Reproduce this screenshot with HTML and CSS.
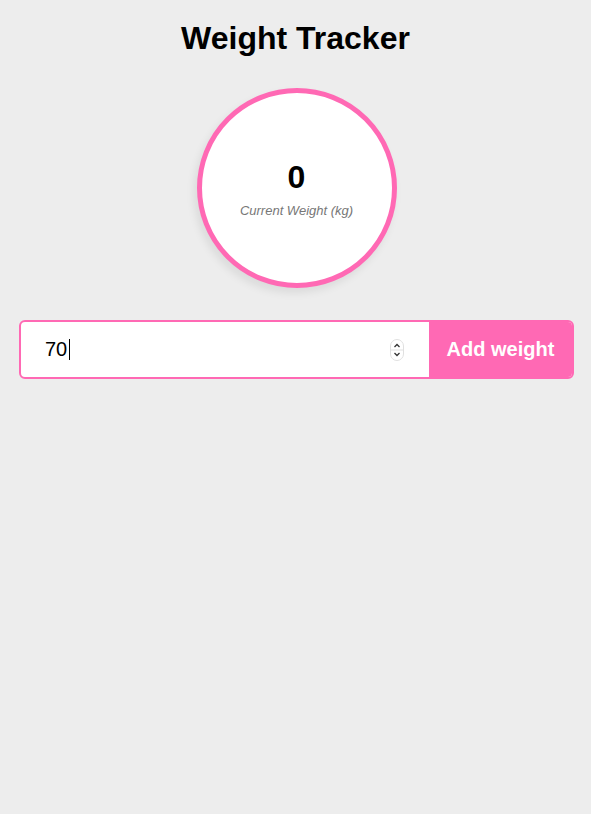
FILE: index.html
```html
<!DOCTYPE html>
<html>
<head>
<meta charset="utf-8">
<link rel="stylesheet" href="styles.css">
</head>
<body>
<div class="app">
  <h1 class="title">Weight Tracker</h1>
  <div class="circle">
    <div class="value">0</div>
    <div class="label">Current Weight (kg)</div>
  </div>
  <form class="entry">
    <div class="field">
      <input class="input" type="text" value="70">
      <span class="caret"></span>
      <span class="spinner">
        <svg width="14" height="22" viewBox="0 0 14 22">
          <rect x="0.5" y="0.5" width="13" height="21" rx="6.5" fill="#fff" stroke="#e0e0e0"/>
          <line x1="1" y1="11" x2="13" y2="11" stroke="#e0e0e0"/>
          <path d="M4.5 8 L7 5.5 L9.5 8" fill="none" stroke="#333" stroke-width="1.3"/>
          <path d="M4.5 14 L7 16.5 L9.5 14" fill="none" stroke="#333" stroke-width="1.3"/>
        </svg>
      </span>
    </div>
    <button class="add" type="button">Add weight</button>
  </form>
</div>
</body>
</html>
```
FILE: styles.css
```css
html, body {
  margin: 0;
  padding: 0;
  background: #ededed;
  font-family: "Liberation Sans", Arial, sans-serif;
}
.app {
  display: flex;
  flex-direction: column;
  align-items: center;
  padding-top: 17px;
}
.title {
  margin: 0;
  font-size: 32px;
  font-weight: bold;
  line-height: 42px;
  color: #000;
}
.circle {
  margin-top: 29px;
  width: 190px;
  height: 190px;
  border: 5px solid #ff69b4;
  border-radius: 50%;
  background: #fff;
  box-shadow: -3px 5px 8px rgba(0,0,0,0.08);
  display: flex;
  flex-direction: column;
  align-items: center;
  justify-content: center;
  margin-left: 2px;
}
.value {
  font-size: 32px;
  font-weight: bold;
  line-height: 36px;
  margin-top: 0;
}
.label {
  margin-top: 8px;
  font-size: 13px;
  font-style: italic;
  color: #777;
}
.entry {
  margin: 32px 0 0 2px;
  width: 555px;
  height: 59px;
  box-sizing: border-box;
  display: flex;
  border: 2px solid #ff69b4;
  border-radius: 6px;
  background: #fff;
  overflow: hidden;
}
.field {
  flex: 1;
  display: flex;
  align-items: center;
  position: relative;
  padding-left: 24px;
  padding-right: 24px;
}
.input {
  flex: 1;
  border: none;
  outline: none;
  background: transparent;
  font-family: "Liberation Sans", Arial, sans-serif;
  font-size: 20px;
  color: #000;
  padding: 0;
  height: 30px;
}
.caret {
  position: absolute;
  left: 48px;
  top: 17px;
  width: 1px;
  height: 21px;
  background: #000;
}
.spinner {
  display: flex;
  align-items: center;
  margin-right: 1px;
}
.add {
  width: 143px;
  border: none;
  background: #ff69b4;
  color: #fff;
  font-family: "Liberation Sans", Arial, sans-serif;
  font-size: 20px;
  font-weight: bold;
  padding: 0;
}
```
